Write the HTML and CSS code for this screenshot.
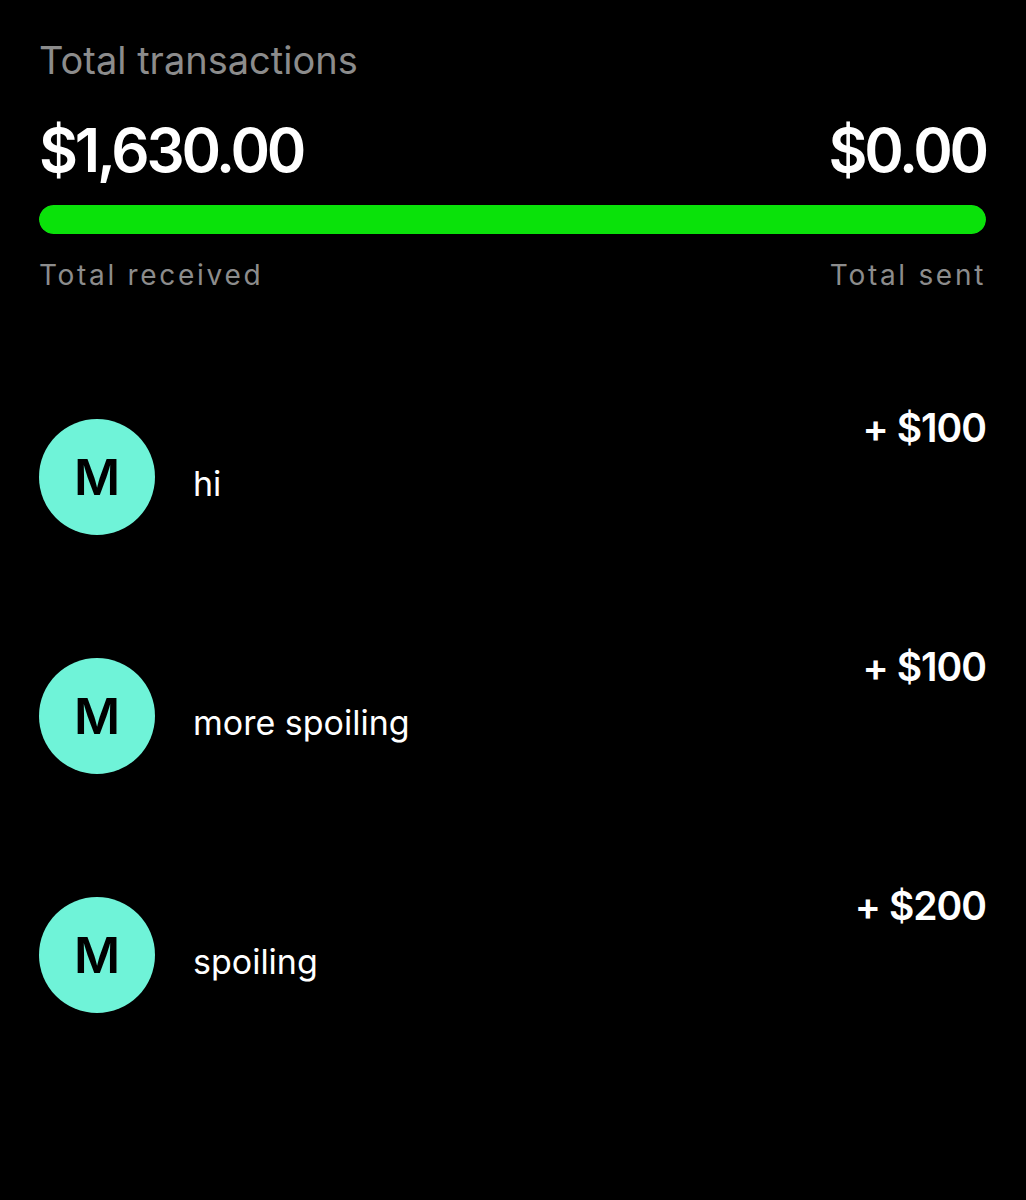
FILE: index.html
```html
<!DOCTYPE html>
<html lang="en">
<head>
  <meta charset="UTF-8">
  <meta name="viewport" content="width=device-width, initial-scale=1.0">
  <title>Total transactions</title>
  <link rel="stylesheet" href="styles.css">
</head>
<body>
  <main class="screen">
    <!-- Summary: received vs sent -->
    <section class="summary">
      <h1 class="summary-title">Total transactions</h1>
      <div class="totals">
        <span class="total">$1,630.00</span>
        <span class="total">$0.00</span>
      </div>
      <div class="bar"><div class="bar-fill" style="width: 100%"></div></div>
      <div class="labels">
        <span>Total received</span>
        <span>Total sent</span>
      </div>
    </section>

    <!-- Transaction list -->
    <section class="tx-list">
      <div class="tx">
        <div class="avatar">M</div>
        <div class="tx-note">hi</div>
        <div class="tx-amount">+ $100</div>
      </div>
      <div class="tx">
        <div class="avatar">M</div>
        <div class="tx-note">more spoiling</div>
        <div class="tx-amount">+ $100</div>
      </div>
      <div class="tx">
        <div class="avatar">M</div>
        <div class="tx-note">spoiling</div>
        <div class="tx-amount">+ $200</div>
      </div>
    </section>
  </main>
</body>
</html>
```

FILE: styles.css
```css
/* Base styles */
body {
  margin: 0;
  padding: 0;
  background-color: #000;
  color: #fff;
  font-family: Inter, "Liberation Sans", sans-serif;
}
.screen {
  padding: 38px 40px 0 39px;
  height: 1200px;
  box-sizing: border-box;
}

/* Summary */
.summary-title {
  margin: 0;
  font-size: 38px;
  font-weight: 400;
  color: #8c8c8c;
  letter-spacing: 0;
  line-height: 44px;
}
.totals {
  display: flex;
  justify-content: space-between;
  margin-top: 36px;
}
.total {
  font-size: 60px;
  font-weight: 600;
  letter-spacing: -3.2px;
  line-height: 64px;
}
.bar {
  margin-top: 23px;
  height: 29px;
  border-radius: 15px;
  background-color: #1e1e1e;
  overflow: hidden;
}
.bar-fill {
  height: 100%;
  background-color: #0ae20a;
  border-radius: 15px;
}
.labels {
  display: flex;
  justify-content: space-between;
  margin-top: 25px;
  font-size: 28px;
  letter-spacing: 2.7px;
  color: #8c8c8c;
  line-height: 32px;
}

/* Transactions */
.tx-list {
  margin-top: 113px;
}
.tx {
  display: flex;
  align-items: center;
  height: 239px;
}
.avatar {
  width: 116px;
  height: 116px;
  border-radius: 50%;
  background-color: #6ff3d8;
  color: #000;
  display: flex;
  align-items: center;
  justify-content: center;
  font-size: 50px;
  font-weight: 600;
  flex-shrink: 0;
  margin-top: -94px;
}
.tx-note {
  flex: 1;
  margin-left: 38px;
  margin-top: -80px;
  font-size: 34px;
}
.tx-amount {
  align-self: flex-start;
  font-size: 39px;
  font-weight: 600;
  letter-spacing: -1px;
}
```
